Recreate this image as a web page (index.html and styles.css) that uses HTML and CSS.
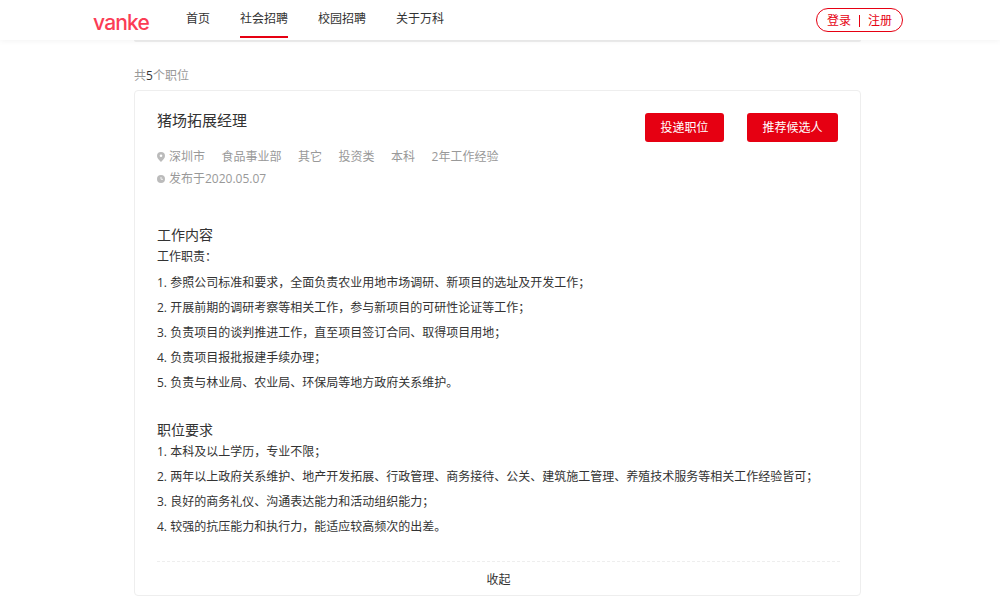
FILE: index.html
```html
<!DOCTYPE html>
<html lang="zh-CN">
<head>
<meta charset="utf-8">
<title>猪场拓展经理</title>
<link rel="stylesheet" href="styles.css">
</head>
<body>
<header class="topbar">
  <div class="logo">vanke</div>
  <nav class="nav">
    <a class="nav-item">首页</a>
    <a class="nav-item active">社会招聘</a>
    <a class="nav-item">校园招聘</a>
    <a class="nav-item">关于万科</a>
  </nav>
  <div class="auth"><span>登录</span><i class="auth-sep"></i><span>注册</span></div>
</header>
<main class="main">
  <div class="prev-card"></div>
  <p class="count">共<b>5</b>个职位</p>
  <section class="card">
    <div class="head">
      <div class="head-info">
        <h1 class="title">猪场拓展经理</h1>
        <div class="meta meta-first">
          <svg class="ico" viewBox="0 0 8 10"><path d="M4 0a4 4 0 0 0-4 4c0 2.400 2.600 4.600 4 6 1.400-1.400 4-3.600 4-6a4 4 0 0 0-4-4z" fill="#bbb"/><circle cx="4" cy="3.800" r="1.300" fill="#fff"/></svg>
          <span class="city">深圳市</span><span>食品事业部</span><span>其它</span><span>投资类</span><span>本科</span><span>2年工作经验</span>
        </div>
        <div class="meta">
          <svg class="ico" viewBox="0 0 8 8"><circle cx="4" cy="4" r="4" fill="#bbb"/><path d="M4 2v2.300h2" stroke="#fff" fill="none" stroke-width=".8"/></svg>
          <span class="city">发布于2020.05.07</span>
        </div>
      </div>
      <div class="actions">
        <button class="btn btn-a">投递职位</button>
        <button class="btn btn-b">推荐候选人</button>
      </div>
    </div>
    <h2 class="sub sub-first">工作内容</h2>
    <p class="line-tight">工作职责：</p>
    <ul class="list">
      <li>1. 参照公司标准和要求，全面负责农业用地市场调研、新项目的选址及开发工作；</li>
      <li>2. 开展前期的调研考察等相关工作，参与新项目的可研性论证等工作；</li>
      <li>3. 负责项目的谈判推进工作，直至项目签订合同、取得项目用地；</li>
      <li>4. 负责项目报批报建手续办理；</li>
      <li>5. 负责与林业局、农业局、环保局等地方政府关系维护。</li>
    </ul>
    <h2 class="sub sub-second">职位要求</h2>
    <ul class="list list-req">
      <li>1. 本科及以上学历，专业不限；</li>
      <li>2. 两年以上政府关系维护、地产开发拓展、行政管理、商务接待、公关、建筑施工管理、养殖技术服务等相关工作经验皆可；</li>
      <li>3. 良好的商务礼仪、沟通表达能力和活动组织能力；</li>
      <li>4. 较强的抗压能力和执行力，能适应较高频次的出差。</li>
    </ul>
    <div class="fold">收起</div>
  </section>
</main>
</body>
</html>
```
FILE: styles.css
```css
* { box-sizing: border-box; }
html, body { margin: 0; padding: 0; }
body {
  height: 601px;
  overflow: hidden;
  background: #fff;
  color: #333;
  font: 12px/20px "Open Sans", "Noto Sans CJK SC", sans-serif;
}
p, h1, h2, ul { margin: 0; padding: 0; font-weight: 400; }
li { list-style: none; }

.topbar {
  position: relative;
  height: 40px;
  display: flex;
  align-items: flex-start;
  padding-left: 93px;
  background: #fff;
  box-shadow: 0 1px 6px rgba(0,0,0,.05);
}
.logo {
  width: 93px;
  height: 40px;
  color: #fb3c55;
  font: 500 21px/46px "Inter", sans-serif;
  letter-spacing: -.8px;
}
.nav { display: flex; gap: 30px; }
.nav-item {
  height: 38px;
  line-height: 37px;
  color: #333;
}
.nav-item.active { border-bottom: 2px solid #e60012; }
.auth {
  margin: 8px 97px 0 auto;
  width: 87px;
  height: 24px;
  padding-top: 1px;
  border: 1px solid #e60012;
  border-radius: 12px;
  color: #e60012;
  display: flex;
  align-items: center;
  justify-content: center;
  line-height: 22px;
}
.auth-sep {
  width: 1px;
  height: 12px;
  margin: 0 8px;
  background: #e60012;
}

.main { padding-left: 134px; }
.prev-card {
  width: 727px;
  height: 2px;
  border-bottom: 2px solid #eee;
  border-radius: 0 0 4px 4px;
}
.count { margin-top: 24px; height: 20px; color: #999; }
.count b { font-weight: 400; color: #333; }
.card {
  width: 727px;
  height: 506px;
  margin-top: 4px;
  padding: 0 20px 0 22px;
  border: 1px solid #eee;
  border-radius: 4px;
}
.head { display: flex; justify-content: space-between; height: 107px; }
.title { margin-top: 18px; font-size: 15px; line-height: 22px; color: #333; }
.meta { display: flex; align-items: center; height: 22px; color: #999; }
.meta-first { margin-top: 15px; }
.meta span { margin-right: 16.5px; }
.meta .city { margin-left: 4px; }
.ico { width: 8px; height: 10px; }
.actions { display: flex; gap: 23px; margin-top: 22px; margin-right: 2px; }
.btn {
  height: 29px;
  padding: 1px 0 0;
  border: 0;
  border-radius: 3px;
  background: #e60012;
  color: #fff;
  font: inherit;
}
.btn-a { width: 79px; }
.btn-b { width: 91px; }
.sub { font-size: 14px; line-height: 20px; color: #333; }
.sub-first { margin-top: 27px; }
.line-tight { line-height: 24px; }
.list li { line-height: 25px; }
.list { margin-top: 1px; }
.sub-second { margin-top: 25px; }
.list-req { margin-top: -1px; }
.fold {
  margin-top: 22px;
  height: 34px;
  border-top: 1px dashed #eee;
  text-align: center;
  line-height: 35px;
}
```
